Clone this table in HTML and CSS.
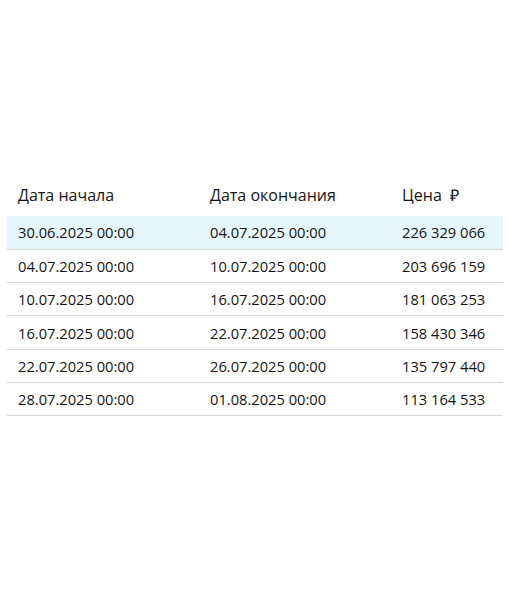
FILE: index.html
```html
<!DOCTYPE html>
<html>
    <head>
        <link rel="stylesheet" href="styles.css">
    </head>
    <body>
        <div class="wrap">
            <table class="prices">
                <thead>
                    <tr>
                        <th>Дата начала</th>
                        <th>Дата окончания</th>
                        <th>Цена <span class="rub">₽</span></th>
                    </tr>
                </thead>
                <tbody>
                    <tr class="active">
                        <td>30.06.2025 00:00</td>
                        <td>04.07.2025 00:00</td>
                        <td>226 329 066</td>
                    </tr>
                    <tr>
                        <td>04.07.2025 00:00</td>
                        <td>10.07.2025 00:00</td>
                        <td>203 696 159</td>
                    </tr>
                    <tr>
                        <td>10.07.2025 00:00</td>
                        <td>16.07.2025 00:00</td>
                        <td>181 063 253</td>
                    </tr>
                    <tr>
                        <td>16.07.2025 00:00</td>
                        <td>22.07.2025 00:00</td>
                        <td>158 430 346</td>
                    </tr>
                    <tr>
                        <td>22.07.2025 00:00</td>
                        <td>26.07.2025 00:00</td>
                        <td>135 797 440</td>
                    </tr>
                    <tr>
                        <td>28.07.2025 00:00</td>
                        <td>01.08.2025 00:00</td>
                        <td>113 164 533</td>
                    </tr>
                </tbody>
            </table>
        </div>
    </body>
</html>
```

FILE: styles.css
```css
* {
    box-sizing: border-box;
}
body {
    margin: 0;
    background-color: white;
    font-family: "Open Sans", sans-serif;
    color: #141414;
}
.wrap {
    padding: 180px 7px 0 7px;
}
.prices {
    width: 100%;
    border-collapse: collapse;
    table-layout: fixed;
}
.prices th:nth-child(1),
.prices th:nth-child(2) {
    width: 192px;
}
.prices th {
    text-align: left;
    font-size: 16px;
    font-weight: 500;
    padding: 4px 11px 10px 11px;
    height: 34px;
}
.prices th .rub {
    margin-left: 4px;
}
.prices td {
    font-size: 14.7px;
    font-weight: 500;
    padding: 0 11px;
    height: 33.3px;
    border-bottom: 1px solid #d6d6d6;
}
.prices tr.active td {
    background-color: #e6f6fd;
}
```
